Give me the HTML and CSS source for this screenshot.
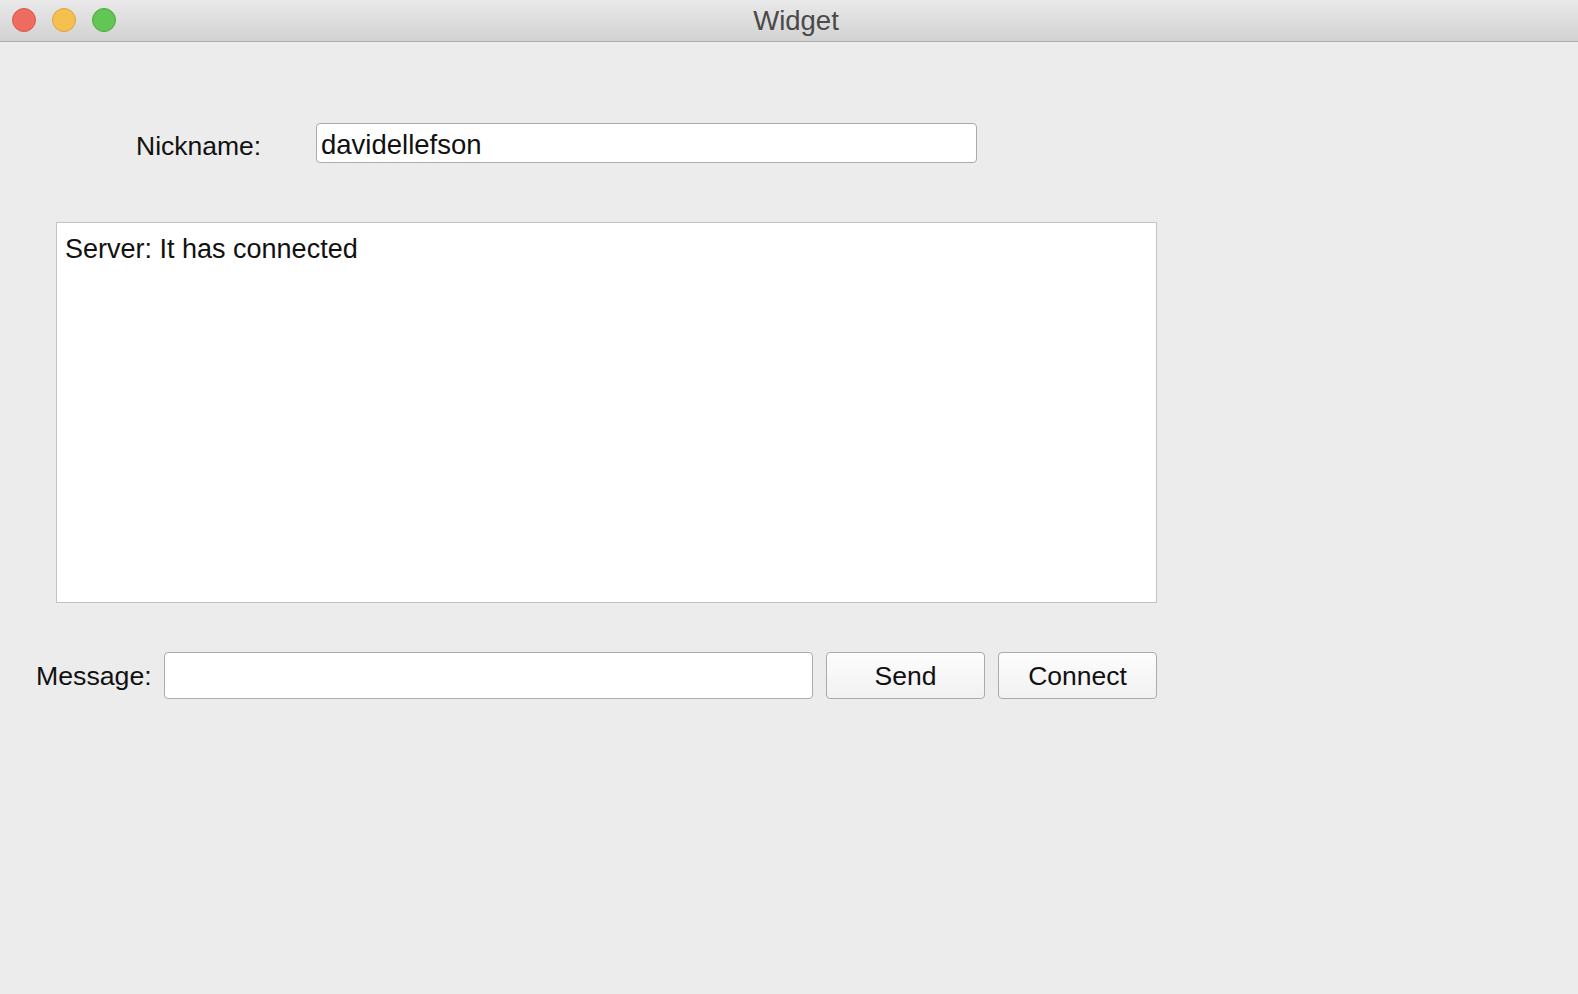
FILE: index.html
```html
<!DOCTYPE html>
<html>
<head>
<meta charset="utf-8">
<title>Widget</title>
<link rel="stylesheet" href="styles.css">
</head>
<body>
<div class="window">
  <div class="titlebar">
    <div class="lights">
      <span class="light red"></span>
      <span class="light yellow"></span>
      <span class="light green"></span>
    </div>
    <div class="title">Widget</div>
  </div>
  <div class="content">
    <div class="nick-row">
      <label class="nick-label">Nickname:</label>
      <div class="field nick-field">davidellefson</div>
    </div>
    <div class="log">Server: It has connected</div>
    <div class="msg-row">
      <label class="msg-label">Message:</label>
      <div class="field msg-field"></div>
      <button class="btn">Send</button>
      <button class="btn">Connect</button>
    </div>
  </div>
</div>
</body>
</html>
```
FILE: styles.css
```css
html, body {
  margin: 0;
  padding: 0;
  height: 100%;
  background: #ececec;
}
.window {
  width: 1578px;
  height: 994px;
  display: flex;
  flex-direction: column;
  font-family: "Liberation Sans", Arial, sans-serif;
  color: #111;
}
.titlebar {
  position: relative;
  height: 41px;
  flex: none;
  background: linear-gradient(#e9e9e9, #d2d2d2);
  border-bottom: 1px solid #acacac;
  display: flex;
  align-items: center;
  justify-content: center;
}
.lights {
  position: absolute;
  left: 12px;
  top: 8px;
  display: flex;
  gap: 16px;
}
.light {
  width: 24px;
  height: 24px;
  border-radius: 50%;
  box-sizing: border-box;
}
.red { background: #ee6b60; border: 1px solid #d9564b; }
.yellow { background: #f6c04f; border: 1px solid #dea33a; }
.green { background: #62c655; border: 1px solid #4ca83f; }
.title {
  font-size: 27.5px;
  color: #4a4a4a;
  margin-left: 14px;
}
.content {
  flex: 1;
  display: flex;
  flex-direction: column;
}
.nick-row {
  margin-top: 81px;
  padding-left: 136px;
  display: flex;
  align-items: center;
}
.nick-label {
  width: 180px;
  font-size: 26.5px;
  margin-top: 6px;
}
.field {
  box-sizing: border-box;
  background: #fff;
  border: 1.5px solid #ababab;
  border-radius: 4px;
}
.nick-field {
  width: 661px;
  height: 40px;
  font-size: 27.5px;
  padding: 6px 0 0 4px;
  line-height: 30px;
}
.log {
  margin: 59px 0 0 56px;
  width: 1101px;
  height: 381px;
  box-sizing: border-box;
  background: #fff;
  border: 1px solid #c3c3c3;
  padding: 11px 8px;
  font-size: 27px;
  line-height: 30px;
}
.msg-row {
  margin-top: 49px;
  padding-left: 36px;
  display: flex;
  align-items: center;
  gap: 13px;
}
.msg-label {
  width: 115px;
  font-size: 26.7px;
  margin-top: 2px;
}
.msg-field {
  width: 649px;
  height: 47px;
}
.btn {
  width: 159px;
  height: 47px;
  box-sizing: border-box;
  border: 1.5px solid #ababab;
  border-radius: 4px;
  background: linear-gradient(#fdfdfd, #f1f1f1);
  font-family: "Liberation Sans", Arial, sans-serif;
  font-size: 26.5px;
  color: #111;
  padding: 2px 0 0;
}
```
